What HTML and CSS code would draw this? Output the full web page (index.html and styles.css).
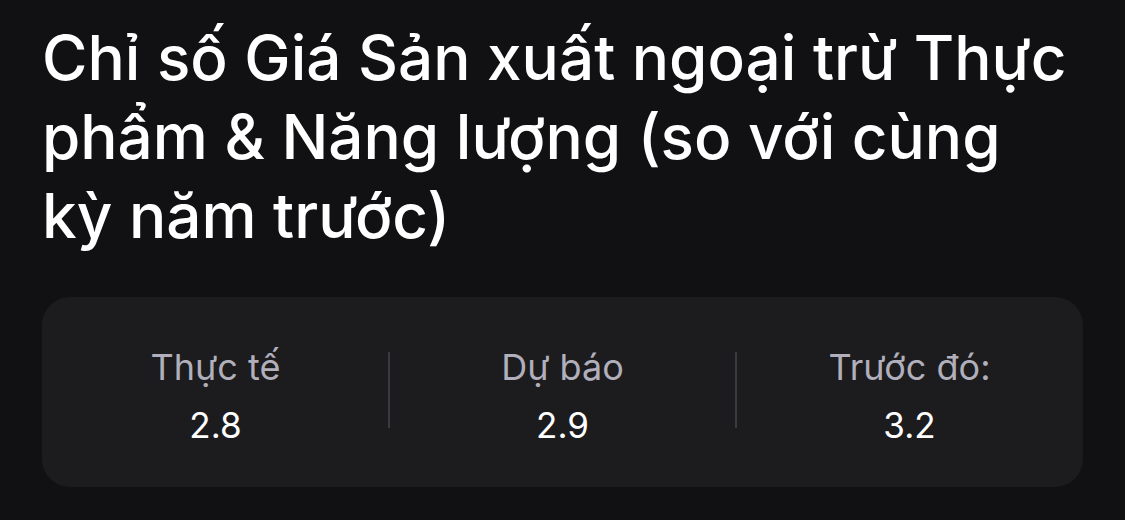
FILE: index.html
```html
<!DOCTYPE html>
<html lang="vi">
<head>
<meta charset="utf-8">
<link rel="stylesheet" href="styles.css">
</head>
<body>
<main class="page">
  <h1 class="title">Chỉ số Giá Sản xuất ngoại trừ Thực phẩm &amp; Năng lượng (so với cùng kỳ năm trước)</h1>
  <section class="card">
    <div class="stat">
      <div class="label">Thực tế</div>
      <div class="value">2.8</div>
    </div>
    <div class="stat">
      <div class="label">Dự báo</div>
      <div class="value">2.9</div>
    </div>
    <div class="stat">
      <div class="label">Trước đó:</div>
      <div class="value">3.2</div>
    </div>
  </section>
</main>
</body>
</html>
```
FILE: styles.css
```css
html, body {
  margin: 0;
  padding: 0;
  background: #111113;
}
body {
  font-family: Inter, "Noto Sans", "Liberation Sans", sans-serif;
  color: #ffffff;
}
.page {
  padding: 18px 42px 0 42px;
  width: 1041px;
}
.title {
  margin: 0;
  font-size: 62px;
  font-weight: 500;
  line-height: 79px;
  letter-spacing: 0;
}
.card {
  margin-top: 42px;
  height: 190px;
  background: #1c1c1e;
  border-radius: 28px;
  display: grid;
  grid-template-columns: 1fr 1fr 1fr;
  align-items: center;
}
.stat {
  display: flex;
  flex-direction: column;
  align-items: center;
  gap: 14px;
  position: relative;
  padding-top: 8px;
}
.stat + .stat::before {
  content: "";
  position: absolute;
  left: -1px;
  top: 50%;
  width: 2px;
  height: 76px;
  margin-top: -40px;
  background: #3a3a3f;
}
.label {
  font-size: 36px;
  line-height: 44px;
  color: #b0afbb;
}
.value {
  font-size: 35px;
  line-height: 44px;
  color: #ffffff;
}
```
